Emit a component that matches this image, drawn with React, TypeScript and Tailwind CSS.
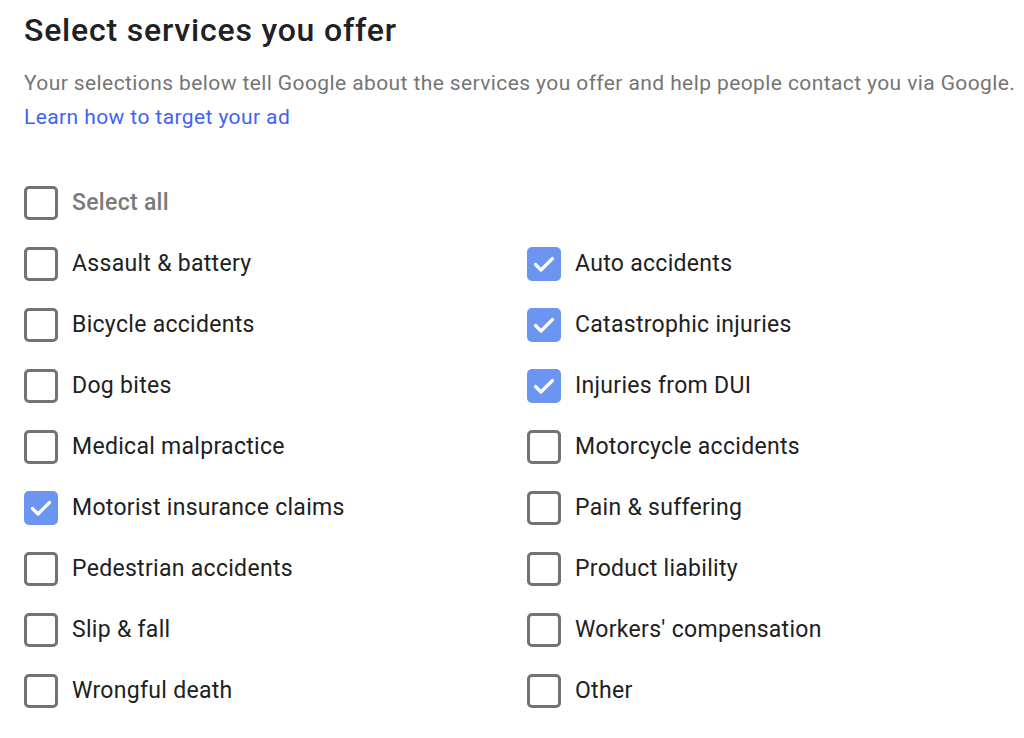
import React from "react";

type Item = { label: string; checked?: boolean };

const left: Item[] = [
  { label: "Assault & battery" },
  { label: "Bicycle accidents" },
  { label: "Dog bites" },
  { label: "Medical malpractice" },
  { label: "Motorist insurance claims", checked: true },
  { label: "Pedestrian accidents" },
  { label: "Slip & fall" },
  { label: "Wrongful death" },
];

const right: Item[] = [
  { label: "Auto accidents", checked: true },
  { label: "Catastrophic injuries", checked: true },
  { label: "Injuries from DUI", checked: true },
  { label: "Motorcycle accidents" },
  { label: "Pain & suffering" },
  { label: "Product liability" },
  { label: "Workers' compensation" },
  { label: "Other" },
];

function Box({ checked }: { checked?: boolean }) {
  if (checked) {
    return (
      <div className="w-[34px] h-[34px] rounded-[5px] bg-[#6b95f1] flex items-center justify-center shrink-0">
        <svg width="34" height="34" viewBox="0 0 34 34">
          <polyline
            points="8.5,17.5 14,23 25.5,11.5"
            fill="none"
            stroke="#ffffff"
            strokeWidth="3.2"
            strokeLinecap="round"
            strokeLinejoin="round"
          />
        </svg>
      </div>
    );
  }
  return <div className="w-[34px] h-[34px] rounded-[5px] border-[3px] border-[#737373] bg-white shrink-0" />;
}

function Row({ item, muted }: { item: Item; muted?: boolean }) {
  return (
    <div className="flex items-center h-[61px] gap-[14px]">
      <Box checked={item.checked} />
      <span
        className={`text-[23px] leading-none tracking-[0.3px] -mt-[1px] ${
          muted ? "text-[#7a7a7a] font-medium" : "text-[#212121]"
        }`}
      >
        {item.label}
      </span>
    </div>
  );
}

export default function App() {
  return (
    <div
      className="w-[1024px] h-[738px] bg-white pl-[24px] pt-[12px] overflow-hidden"
      style={{ fontFamily: "Roboto, 'Noto Sans', Arial, sans-serif" }}
    >
      <h1 className="text-[32px] leading-[36px] font-medium tracking-[0.8px] text-[#202124]">
        Select services you offer
      </h1>
      <p className="mt-[18px] text-[21px] leading-[34px] tracking-[0.4px] text-[#757575] whitespace-nowrap">
        Your selections below tell Google about the services you offer and help people contact you via Google.
      </p>
      <p className="text-[21px] leading-[34px] tracking-[0.4px] text-[#3d63f6]">Learn how to target your ad</p>
      <div className="mt-[39px]">
        <div className="flex items-center h-[60px]">
          <Row item={{ label: "Select all" }} muted />
        </div>
        <div className="grid grid-cols-[503px_1fr]">
          <div className="flex flex-col">
            {left.map((it) => (
              <Row key={it.label} item={it} />
            ))}
          </div>
          <div className="flex flex-col">
            {right.map((it) => (
              <Row key={it.label} item={it} />
            ))}
          </div>
        </div>
      </div>
    </div>
  );
}
